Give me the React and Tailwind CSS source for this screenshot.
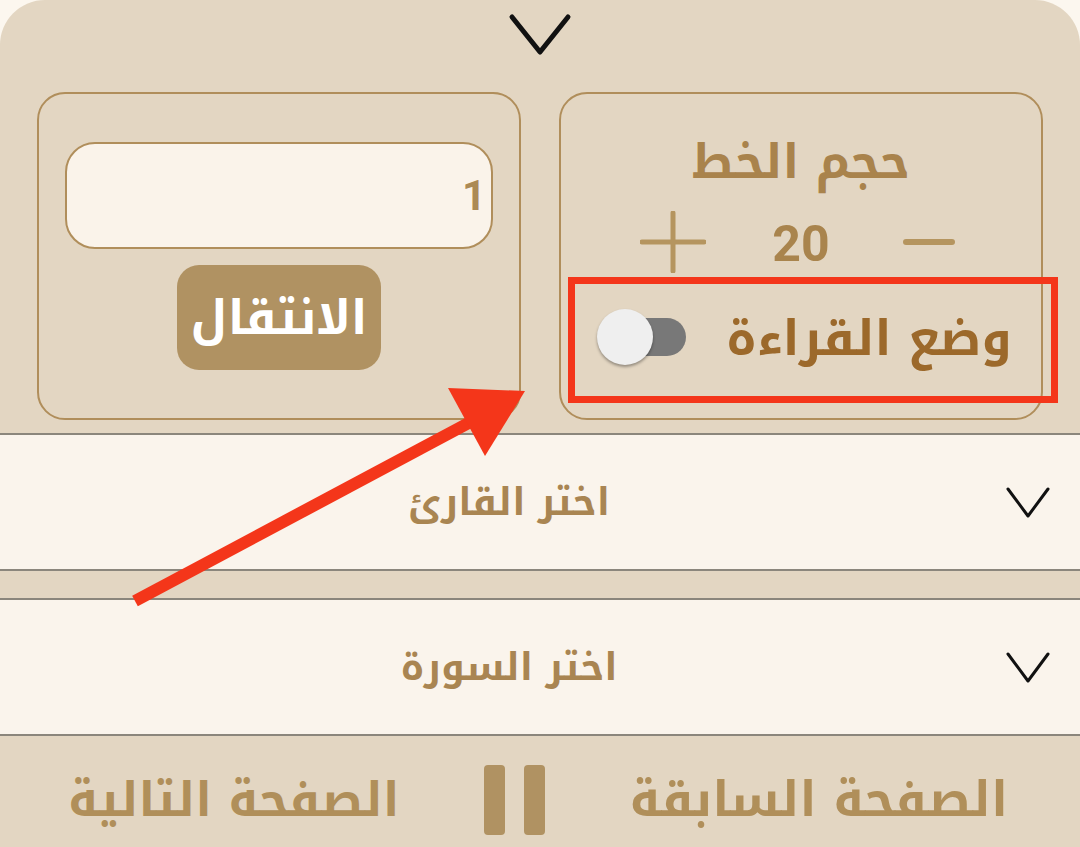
import { useState } from 'react';

const arabic = { fontFamily: '"Noto Kufi Arabic", "Noto Sans Arabic", "DejaVu Sans", sans-serif' };
const digits = { fontFamily: 'Roboto, "DejaVu Sans", sans-serif' };

function Chevron({ className, width = 40, height = 27, stroke = 3 }) {
  return (
    <svg className={className} width={width + stroke * 2} height={height + stroke * 2} viewBox={`0 0 ${width + stroke * 2} ${height + stroke * 2}`} fill="none">
      <polyline
        points={`${stroke},${stroke} ${width / 2 + stroke},${height + stroke} ${width + stroke},${stroke}`}
        stroke="#111"
        strokeWidth={stroke}
        strokeLinecap="round"
        strokeLinejoin="round"
      />
    </svg>
  );
}

function Toggle({ on, onChange }) {
  return (
    <button onClick={() => onChange(!on)} className="relative w-[89px] h-[58px] shrink-0" aria-label="toggle">
      <span className="absolute left-[19px] top-[10px] w-[70px] h-[38px] rounded-full bg-[#787878]" />
      <span className="absolute left-0 top-[1px] w-[56px] h-[56px] rounded-full bg-[#efefef] shadow-[0_2px_3px_rgba(0,0,0,0.35)]" />
    </button>
  );
}

function Dropdown({ label }) {
  return (
    <div className="flex items-center h-[138px] bg-[#faf4ec] border-y-2 border-[#8b867c] pr-[29px]">
      <Chevron width={40} height={27} stroke={3} />
      <div className="flex-1 text-center text-[38px] font-bold text-[#a98552] mr-[-13px]" style={arabic}>
        {label}
      </div>
    </div>
  );
}

export default function App() {
  const [size, setSize] = useState(20);
  const [page, setPage] = useState('1');
  const [reading, setReading] = useState(false);

  return (
    <div className="relative w-[1080px] h-[847px] bg-[#fcf7ef] overflow-hidden">
      <div dir="rtl" className="flex flex-col h-full bg-[#e3d6c2] rounded-t-[45px]">
        <div className="flex justify-center h-[92px] pt-[12px]">
          <Chevron width={56} height={35} stroke={5} />
        </div>

        <div className="flex gap-[38px] px-[37px] h-[328px]">
          {/* font size + reading mode */}
          <div className="flex flex-col w-[484px] border-2 border-[#b08e5b] rounded-[28px] pt-[38px]">
            <div className="flex items-center justify-center h-[60px] text-[48px] font-bold text-[#a9834c]" style={arabic}>
              حجم الخط
            </div>
            <div className="flex justify-center h-[60px] mt-[20px]">
              <button onClick={() => setSize((s) => s - 1)} className="flex items-center justify-center w-[128px]" aria-label="decrease">
                <span className="block w-[52px] h-[6px] rounded-full bg-[#b5955f]" />
              </button>
              <div className="flex items-center justify-center w-[128px] pt-[4px] text-[50px] font-bold text-[#a9844d]" style={digits}>
                {size}
              </div>
              <button onClick={() => setSize((s) => s + 1)} className="flex items-center justify-center w-[128px]" aria-label="increase">
                <svg width="66" height="62" viewBox="0 0 66 62">
                  <path d="M2 31 H64 M33 2 V60" stroke="#b5955f" strokeWidth="5" strokeLinecap="round" />
                </svg>
              </button>
            </div>
            <div className="flex items-center justify-between h-[60px] mt-[35px] pr-[29px] pl-[36px]">
              <span className="pt-[4px] text-[49px] font-bold text-[#9c692b]" style={arabic}>
                وضع القراءة
              </span>
              <Toggle on={reading} onChange={setReading} />
            </div>
          </div>

          {/* go to page */}
          <div className="flex flex-col items-center w-[484px] border-2 border-[#b08e5b] rounded-[28px] pt-[48px]">
            <input
              value={page}
              onChange={(e) => setPage(e.target.value)}
              className="w-[428px] h-[107px] bg-[#faf3ea] border-2 border-[#b08e5b] rounded-[30px] pr-[5px] text-right text-[42px] font-bold text-[#ac8a55] outline-none"
              style={digits}
            />
            <button className="mt-[16px] w-[204px] h-[105px] rounded-[22px] bg-[#b09262] text-white text-[48px] font-bold" style={arabic}>
              الانتقال
            </button>
          </div>
        </div>

        <div className="h-[13px]" />
        <Dropdown label="اختر القارئ" />
        <div className="h-[27px]" />
        <Dropdown label="اختر السورة" />

        <div className="flex flex-1 items-center justify-between pr-[72px] pl-[68px] pt-[16px]">
          <span className="text-[49px] font-bold text-[#b08f5a]" style={arabic}>
            الصفحة السابقة
          </span>
          <button className="flex gap-[19px] h-[70px]" aria-label="pause">
            <span className="block w-[21px] h-full rounded-[4px] bg-[#b09262]" />
            <span className="block w-[21px] h-full rounded-[4px] bg-[#b09262]" />
          </button>
          <span className="text-[48px] font-bold text-[#b08f5a]" style={arabic}>
            الصفحة التالية
          </span>
        </div>
      </div>

      {/* annotation overlay */}
      <svg className="absolute inset-0 pointer-events-none" width="1080" height="847" viewBox="0 0 1080 847">
        <rect x="571.5" y="280.5" width="483" height="119" fill="none" stroke="#f4361a" strokeWidth="7" />
        <line x1="135" y1="601" x2="478" y2="418" stroke="#f4361a" strokeWidth="12" />
        <polygon points="525,391 448,388 485,456" fill="#f4361a" />
      </svg>
    </div>
  );
}
